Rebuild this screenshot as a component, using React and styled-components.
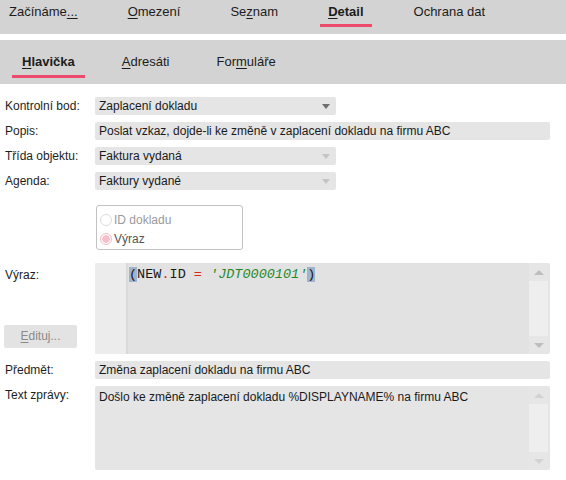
import React from "react";
import styled, { createGlobalStyle } from "styled-components";

const GlobalStyle = createGlobalStyle`
  body {
    margin: 0;
    background: #ffffff;
    font-family: "Liberation Sans", Arial, sans-serif;
  }
`;

const Page = styled.div`
  width: 566px;
  height: 480px;
  overflow: hidden;
  background: #ffffff;
`;

const TabBar = styled.nav`
  display: flex;
  align-items: flex-start;
  gap: ${(p) => p.$gap}px;
  height: ${(p) => p.$height}px;
  padding-left: ${(p) => p.$inset}px;
  padding-top: ${(p) => p.$top}px;
  margin-bottom: ${(p) => p.$after}px;
  box-sizing: border-box;
  background: #d3d3d3;
`;

const Tab = styled.div`
  position: relative;
  font-size: 13px;
  line-height: 16px;
  color: #1c1c1c;
  font-weight: ${(p) => (p.$active ? 700 : 400)};
  white-space: nowrap;
  u {
    text-decoration: underline;
    text-underline-offset: 2px;
  }
  &::after {
    content: "";
    display: ${(p) => (p.$active ? "block" : "none")};
    position: absolute;
    left: -${(p) => p.$reach}px;
    right: -${(p) => p.$reach}px;
    top: ${(p) => p.$lineTop}px;
    height: 3px;
    background: #ec4b6c;
  }
`;

const Form = styled.div`
  display: grid;
  grid-template-columns: 95px 455px;
  row-gap: 7px;
  padding-top: 13px;
  font-size: 12px;
  color: #1e1e1e;
`;

const Label = styled.div`
  padding-left: 5px;
  line-height: 18px;
  white-space: nowrap;
`;

const Field = styled.div`
  position: relative;
  width: ${(p) => p.$width || 455}px;
  height: ${(p) => p.$height || 18}px;
  box-sizing: border-box;
  padding: 0 4px;
  line-height: 18px;
  background: #e5e5e5;
  border-radius: 2px;
  color: #1a1a1a;
  white-space: nowrap;
  overflow: hidden;
`;

const Caret = styled.span`
  position: absolute;
  right: 6px;
  top: 7px;
  width: 0;
  height: 0;
  border-left: 4px solid transparent;
  border-right: 4px solid transparent;
  border-top: 5px solid ${(p) => (p.$disabled ? "#c4c4c4" : "#6e6e6e")};
`;

const RadioGroup = styled.div`
  grid-column: 2;
  margin: 8px 0 6px 1px;
  width: 147px;
  height: 45px;
  box-sizing: border-box;
  border: 1px solid #c2c2c2;
  border-radius: 3px;
  padding: 6px 0 0 3px;
  display: flex;
  flex-direction: column;
  gap: 3px;
`;

const RadioOption = styled.label`
  display: flex;
  align-items: center;
  gap: 2px;
  font-size: 12px;
  line-height: 16px;
  color: ${(p) => (p.$checked ? "#555555" : "#9a9a9a")};
`;

const RadioDot = styled.span`
  width: 12px;
  height: 12px;
  box-sizing: border-box;
  border-radius: 50%;
  border: 1px solid ${(p) => (p.$checked ? "#f5b9c6" : "#dcdcdc")};
  background: ${(p) => (p.$checked ? "radial-gradient(circle, #f8bfcb 0 3.5px, #ffffff 4px)" : "#ffffff")};
`;

const LabelColumn = styled.div`
  display: flex;
  flex-direction: column;
  justify-content: space-between;
  padding-bottom: 6px;
`;

const Button = styled.div`
  margin-left: 4px;
  width: 73px;
  height: 23px;
  border-radius: 2px;
  background: #e3e3e3;
  color: #8a8a8a;
  font-size: 12px;
  line-height: 23px;
  text-align: center;
  u {
    text-underline-offset: 2px;
  }
`;

const Editor = styled.div`
  display: flex;
  width: 455px;
  height: ${(p) => p.$height}px;
  background: #e5e5e5;
  border-radius: 2px;
  overflow: hidden;
`;

const Gutter = styled.div`
  width: 31px;
  background: #ececec;
  border-right: 2px solid #dadada;
`;

const Code = styled.pre`
  flex: 1;
  margin: 0;
  padding: 3px 0 0 1px;
  background: #e2e2e2;
  font-family: "Liberation Mono", "Courier New", monospace;
  font-size: 13.5px;
  line-height: 17px;
  color: #1a1a1a;
`;

const Text = styled.div`
  flex: 1;
  padding: 3px 4px 0;
  font-size: 12px;
  line-height: 16px;
  color: #1a1a1a;
`;

const Bracket = styled.span`
  background: #9db4cc;
`;

const Op = styled.span`
  color: #e0241c;
`;

const Str = styled.span`
  color: #1d8a2a;
  font-style: italic;
`;

const Scrollbar = styled.div`
  width: 19px;
  margin-right: 2px;
  background: #eeeeee;
  display: flex;
  flex-direction: column;
  justify-content: space-between;
`;

const ScrollButton = styled.div`
  height: 18px;
  background: #e6e6e6;
  display: flex;
  align-items: center;
  justify-content: center;
  &::before {
    content: "";
    width: 0;
    height: 0;
    border-left: 5px solid transparent;
    border-right: 5px solid transparent;
    ${(p) => (p.$down ? "border-top" : "border-bottom")}: 5px solid ${(p) => p.$tone};
  }
`;

const ScrollBar = ({ tone }) => (
  <Scrollbar>
    <ScrollButton $tone={tone} />
    <ScrollButton $down $tone={tone} />
  </Scrollbar>
);

const App = () => {
  const top = [
    { label: <>Začínáme<u>...</u></> },
    { label: <><u>O</u>mezení</> },
    { label: <>Se<u>z</u>nam</> },
    { label: <><u>D</u>etail</>, active: true },
    { label: <>Ochrana dat</> },
  ];
  const sub = [
    { label: <><u>H</u>lavička</>, active: true },
    { label: <><u>A</u>dresáti</> },
    { label: <>For<u>m</u>uláře</> },
  ];

  return (
    <Page>
      <GlobalStyle />
      <TabBar $height={34} $inset={9} $gap={50} $top={4} $after={6}>
        {top.map((t, i) => (
          <Tab key={i} $active={t.active} $reach={8} $lineTop={20}>
            {t.label}
          </Tab>
        ))}
      </TabBar>
      <TabBar $height={44} $inset={22} $gap={47} $top={14}>
        {sub.map((t, i) => (
          <Tab key={i} $active={t.active} $reach={10} $lineTop={21}>
            {t.label}
          </Tab>
        ))}
      </TabBar>

      <Form>
        <Label>Kontrolní bod:</Label>
        <Field $width={241}>
          Zaplacení dokladu
          <Caret />
        </Field>

        <Label>Popis:</Label>
        <Field>Poslat vzkaz, dojde-li ke změně v zaplacení dokladu na firmu ABC</Field>

        <Label>Třída objektu:</Label>
        <Field $width={241}>
          Faktura vydaná
          <Caret $disabled />
        </Field>

        <Label>Agenda:</Label>
        <Field $width={241}>
          Faktury vydané
          <Caret $disabled />
        </Field>

        <RadioGroup>
          <RadioOption>
            <RadioDot />
            ID dokladu
          </RadioOption>
          <RadioOption $checked>
            <RadioDot $checked />
            Výraz
          </RadioOption>
        </RadioGroup>

        <LabelColumn>
          <Label style={{ lineHeight: "20px", paddingTop: 2 }}>Výraz:</Label>
          <Button>
            <u>E</u>dituj...
          </Button>
        </LabelColumn>
        <Editor $height={91}>
          <Gutter />
          <Code>
            <Bracket>(</Bracket>NEW<Op>.</Op>ID <Op>=</Op> <Str>'JDT0000101'</Str>
            <Bracket>)</Bracket>
          </Code>
          <ScrollBar tone="#bdbdbd" />
        </Editor>

        <Label>Předmět:</Label>
        <Field>Změna zaplacení dokladu na firmu ABC</Field>

        <Label>Text zprávy:</Label>
        <Editor $height={84}>
          <Text>Došlo ke změně zaplacení dokladu %DISPLAYNAME% na firmu ABC</Text>
          <ScrollBar tone="#d2d2d2" />
        </Editor>
      </Form>
    </Page>
  );
};

export default App;
